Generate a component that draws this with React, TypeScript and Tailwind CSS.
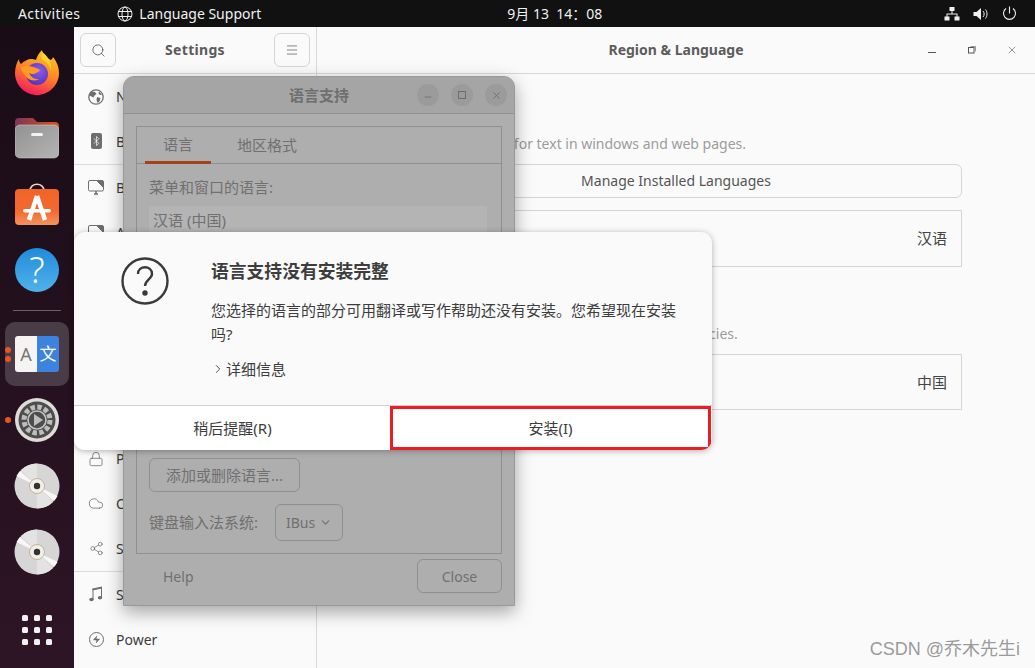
import { Bluetooth, ChevronDown, ChevronRight, Cloud, Lock, Menu, Minus, Search, Share2, X, Zap } from "lucide-react"

const FONT = "font-['Noto_Sans','Noto_Sans_CJK_SC',sans-serif]"

const Firefox = () => (
    <svg width="44" height="46" viewBox="0 0 44 46">
        <defs>
            <linearGradient id="ff" x1="0.7" y1="0" x2="0.3" y2="1">
                <stop offset="0" stopColor="#ffc81e" />
                <stop offset="0.45" stopColor="#ff8a25" />
                <stop offset="1" stopColor="#f5165f" />
            </linearGradient>
            <radialGradient id="fb" cx="0.6" cy="0.35" r="0.8">
                <stop offset="0" stopColor="#8a5be8" />
                <stop offset="1" stopColor="#4e2bb0" />
            </radialGradient>
        </defs>
        <path d="M27 1c1 6 5 8 9 10 1-1 2-2 2-3 4 5 6 10 6 16 0 12-10 22-22 22S0 36 0 24c0-6 2-11 4-14 0 3 1 4 2 5 3-3 7-5 10-5 2 0 3 0 5 1 1-4 3-7 6-10z" fill="url(#ff)" />
        <circle cx="22" cy="25" r="11" fill="url(#fb)" />
        <path d="M6 18c5-2 11-1 15 1 4 1 5 3 2 4-3 2-6 3-9 1 2 4 6 7 11 6-6 3-13 1-16-5-2-2-3-5-3-7z" fill="#ff9b23" />
        <path d="M27 3c6 4 10 10 9 19-1-6-4-9-8-11-2-2-2-5-1-8z" fill="#ffd42e" />
    </svg>
)

const Folder = () => (
    <svg width="44" height="42" viewBox="0 0 44 42">
        <defs>
            <linearGradient id="fo" x1="0" y1="0" x2="1" y2="0">
                <stop offset="0" stopColor="#7e3556" />
                <stop offset="1" stopColor="#d9541f" />
            </linearGradient>
            <linearGradient id="fg" x1="0" y1="0" x2="1" y2="1">
                <stop offset="0" stopColor="#929292" />
                <stop offset="1" stopColor="#b4b4b4" />
            </linearGradient>
        </defs>
        <path d="M0 5a4 4 0 0 1 4-4h14l4 4h18a4 4 0 0 1 4 4v12H0z" fill="url(#fo)" />
        <rect x="0" y="8" width="44" height="33" rx="5" fill="url(#fg)" stroke="#c9c9c9" strokeWidth="0.6" />
        <rect x="16" y="16" width="12" height="3" rx="1.5" fill="#f2f2f2" />
    </svg>
)

const AppStore = () => (
    <svg width="44" height="42" viewBox="0 0 44 42">
        <defs>
            <linearGradient id="as" x1="0" y1="0" x2="0" y2="1">
                <stop offset="0" stopColor="#f0642a" />
                <stop offset="0.6" stopColor="#f2692e" />
                <stop offset="1" stopColor="#f4935f" />
            </linearGradient>
        </defs>
        <path d="M15 8c0-9 14-9 14 0" fill="none" stroke="#f3d6c2" strokeWidth="1.6" />
        <rect x="0" y="6" width="44" height="36" rx="4" fill="url(#as)" />
        <path d="M22 13L14 37M22 13l8 24" fill="none" stroke="#fff" strokeWidth="4.5" />
        <rect x="8" y="26" width="28" height="3.4" rx="1.7" fill="#fff" />
    </svg>
)

const HelpIcon = () => (
    <div className="w-11 h-11 rounded-full bg-linear-to-b from-[#1f8bdc] to-[#4fb3e8] flex items-center justify-center text-white text-[36px] font-light leading-none">?</div>
)

const LangIcon = () => (
    <div className="w-11 h-9 rounded-[3px] overflow-hidden flex">
        <div className="w-[22px] bg-[#f5f4f2] flex items-center justify-center text-[#777] text-[18px]">A</div>
        <div className="w-[22px] bg-[#3b83df] flex items-center justify-center text-white text-[17px]">文</div>
    </div>
)

const Gear = () => (
    <svg width="44" height="44" viewBox="0 0 44 44">
        <circle cx="22" cy="22" r="22" fill="#dedcd9" />
        <circle cx="22" cy="22" r="18.5" fill="#4d4d4d" />
        <circle cx="22" cy="22" r="13" fill="none" stroke="#bdbdbd" strokeWidth="5" strokeDasharray="4.4 2.4" />
        <circle cx="22" cy="22" r="9" fill="#4d4d4d" stroke="#c4c4c4" strokeWidth="1.6" />
        <path d="M19 16l9 6-9 6z" fill="#bdbdbd" />
    </svg>
)

const Disc = () => (
    <svg width="46" height="46" viewBox="0 0 46 46">
        <circle cx="23" cy="23" r="22.5" fill="#d6d6d6" />
        <path d="M23 23L7 7A22.5 22.5 0 0 1 23 .5zM23 23L39 39A22.5 22.5 0 0 1 23 45.500z" fill="#e3e3e3" />
        <path d="M23 23L2.500 13A22.500 22.500 0 0 1 6 8zM23 23L43.500 33A22.500 22.500 0 0 1 40 38z" fill="#f7f7f7" />
        <circle cx="23" cy="23" r="7.500" fill="#f2efe6" stroke="#b5a88e" strokeWidth="0.8" />
        <circle cx="23" cy="23" r="3.200" fill="#333" />
    </svg>
)

const DockItem = ({ children, running = 0, active = false }: { children: React.ReactNode; running?: number; active?: boolean }) => (
    <div className="relative h-[66px] flex items-center justify-center">
        {active && <div className="absolute left-[5px] top-[1px] w-16 h-16 rounded-[10px] bg-[#4a3c47]" />}
        {running > 0 && (
            <div className="absolute left-[5px] top-0 h-full flex flex-col justify-center gap-[3px]">
                {Array.from({ length: running }).map((_, i) => <span key={i} className="w-[6px] h-[6px] rounded-full bg-[#e95420]" />)}
            </div>
        )}
        <div className="relative">{children}</div>
    </div>
)

const Dock = () => (
    <div className="w-[74px] shrink-0 flex flex-col pt-3 bg-linear-to-b from-[#190c17] to-[#2e1525]">
        <DockItem><Firefox /></DockItem>
        <DockItem><Folder /></DockItem>
        <DockItem><AppStore /></DockItem>
        <DockItem><HelpIcon /></DockItem>
        <div className="h-[18px] flex items-start pt-[7px] justify-center">
            <div className="w-12 h-px bg-[#6c5f68]" />
        </div>
        <DockItem running={2} active><LangIcon /></DockItem>
        <DockItem running={1}><Gear /></DockItem>
        <DockItem><Disc /></DockItem>
        <DockItem><Disc /></DockItem>
        <div className="mt-[30px] mx-auto grid grid-cols-3 gap-x-[6px] gap-y-[6px]">
            {Array.from({ length: 9 }).map((_, i) => <span key={i} className="w-[6px] h-[6px] rounded-[1.5px] bg-[#f2f0f1]" />)}
        </div>
    </div>
)

const TopBar = () => (
    <div className="h-[27px] shrink-0 bg-[#111111] text-[#f0f0f0] text-[14px] flex items-center relative">
        <span className="ml-[18px] tracking-[0.4px]">Activities</span>
        <svg className="ml-[37px]" width="16" height="16" viewBox="0 0 16 16" fill="none" stroke="#f0f0f0" strokeWidth="1">
            <circle cx="8" cy="8" r="7" /><ellipse cx="8" cy="8" rx="3" ry="7" /><path d="M1 5.500h14M1 10.500h14" />
        </svg>
        <span className="ml-[6px]">Language Support</span>
        <span className="ml-[246px] whitespace-pre">9月 13  14：08</span>
        <div className="ml-auto mr-[18px] flex items-center gap-[13px]">
            <svg width="16" height="14" viewBox="0 0 16 14" fill="#f0f0f0">
                <rect x="5.500" y="0" width="5" height="4" /><rect x="0.500" y="9.500" width="5" height="4" /><rect x="10.500" y="9.500" width="5" height="4" />
                <path d="M7.500 4h1v2.500H13.500V10h-1V7.500h-9V10h-1V6.500H7.500z" />
            </svg>
            <svg width="16" height="14" viewBox="0 0 16 14" fill="none">
                <path d="M0.500 5h3L8 1v12L3.500 9h-3z" fill="#f0f0f0" />
                <path d="M10 4c1.500 1.500 1.500 4.500 0 6M12.500 2.500c2 2.500 2 6.500 0 9" stroke="#f0f0f0" />
            </svg>
            <svg width="15" height="15" viewBox="0 0 15 15" fill="none" stroke="#f0f0f0" strokeWidth="1.100">
                <path d="M7.500 0.500v7M4 2.500a6 6 0 1 0 7 0" />
            </svg>
        </div>
    </div>
)

const SideRow = ({ icon, label, border = false }: { icon: React.ReactNode; label: string; border?: boolean }) => (
    <div className={`h-[45.25px] flex items-center pl-[14px] text-[14px] text-[#3d3d3d] ${border ? "border-b border-[#dcdcdc]" : ""}`}>
        <span className="w-4 flex justify-center text-[#6e6e6e]">{icon}</span>
        <span className="ml-[12px]">{label}</span>
    </div>
)

const NetIcon = () => (
    <svg width="16" height="16" viewBox="0 0 16 16" fill="#6e6e6e">
        <circle cx="8" cy="8" r="7.200" fill="none" stroke="#6e6e6e" strokeWidth="1.300" />
        <path d="M4 2.500l3 .5 1.500 2-2 1.500-1 2-2-1-2-1 .5-2.500zM9 8l3.500 1-1 3.500-2 1.500-1-3zM11 2.500l3 3-2 .5-1.500-1.500z" />
    </svg>
)

const BtIcon = () => (
    <span className="w-[11px] h-[16px] rounded-[2px] bg-[#6e6e6e] flex items-center justify-center">
        <Bluetooth size={12} className="text-white" strokeWidth={1.5} />
    </span>
)

const BgIcon = () => (
    <svg width="16" height="15" viewBox="0 0 16 15" fill="none" stroke="#6e6e6e" strokeWidth="1">
        <rect x="0.500" y="0.500" width="15" height="10.500" rx="1.500" />
        <path d="M9 1h6v6z" fill="#6e6e6e" />
        <path d="M6 14h4M8 11v3" strokeWidth="1.500" />
    </svg>
)

const NoteIcon = () => (
    <svg width="14" height="16" viewBox="0 0 14 16" fill="#6e6e6e">
        <path d="M3.500 2.500L13 .5v2L3.500 4.500z" />
        <path d="M3.500 2.500h1V13h-1zM12 1h1v10.500h-1z" />
        <ellipse cx="2.500" cy="13.500" rx="2.200" ry="1.800" />
        <ellipse cx="11" cy="11.800" rx="2.200" ry="1.800" />
    </svg>
)

const Sidebar = () => (
    <div className="w-[243px] shrink-0 border-r border-[#d8d8d8] flex flex-col">
        <div className="h-[47px] shrink-0 border-b border-[#d8d8d8] flex items-center justify-between px-[6px]">
            <button className="w-9 h-[34px] rounded-[6px] border border-[#d5d5d5] flex items-center justify-center text-[#555]"><Search size={15} strokeWidth={1.300} /></button>
            <span className="font-bold text-[14px] text-[#5c5c5c] tracking-[0.3px] -mt-[2px]">Settings</span>
            <button className="w-9 h-[34px] rounded-[6px] border border-[#d5d5d5] flex items-center justify-center text-[#555]"><Menu size={14} strokeWidth={1.200} /></button>
        </div>
        <SideRow icon={<NetIcon />} label="Network" />
        <SideRow icon={<BtIcon />} label="Bluetooth" border />
        <SideRow icon={<BgIcon />} label="Background" />
        <SideRow icon={<BgIcon />} label="Appearance" />
        <SideRow icon={<BgIcon />} label="Notifications" />
        <SideRow icon={<Search size={15} />} label="Search" />
        <SideRow icon={<BgIcon />} label="Multitasking" />
        <SideRow icon={<BgIcon />} label="Applications" />
        <SideRow icon={<Lock size={18} strokeWidth={1.200} />} label="Privacy" />
        <SideRow icon={<Cloud size={17} strokeWidth={1.200} />} label="Online Accounts" />
        <SideRow icon={<Share2 size={15} strokeWidth={1.200} />} label="Sharing" border />
        <SideRow icon={<NoteIcon />} label="Sound" />
        <SideRow icon={<span className="w-[15px] h-[15px] rounded-full border border-[#6e6e6e] flex items-center justify-center"><Zap size={9} fill="#6e6e6e" strokeWidth={0} /></span>} label="Power" />
    </div>
)

const Main = () => (
    <div className="flex-1 flex flex-col">
        <div className="h-[47px] shrink-0 border-b border-[#d8d8d8] flex items-center relative">
            <span className="w-full text-center font-bold text-[14px] text-[#5c5c5c] -mt-[2px]">Region &amp; Language</span>
            <div className="absolute right-[3px] top-0 h-full flex items-center text-[#555]">
                <span className="w-10 flex justify-center pt-[4px]"><span className="w-2 h-px bg-[#555]" /></span>
                <span className="w-10 flex justify-center"><svg width="8" height="8" viewBox="0 0 8 8" fill="none" stroke="#555"><rect x="0.500" y="1.500" width="5.500" height="5.500" /><path d="M2.500 0.500H7.500V5.500" strokeWidth="0.600" /></svg></span>
                <span className="w-10 flex justify-center"><X size={12} strokeWidth={1.200} /></span>
            </div>
        </div>
        <div className="ml-[73px] w-[572px] pt-[32px]">
            <div className="h-[27px] font-bold text-[14px] text-[#444]">Language</div>
            <p className="text-[14px] text-[#9c9c9c] h-[31px] -ml-[5px]">The language used for text in windows and web pages.</p>
            <button className="w-full h-[34px] pb-[2px] rounded-[6px] border border-[#d5d5d5] text-[14px] text-[#555] flex items-center justify-center">Manage Installed Languages</button>
            <div className="mt-[12px] h-[57px] border border-[#d5d5d5] flex items-center justify-between px-[14px] text-[15px] text-[#444]">
                <span>Language</span><span>汉语</span>
            </div>
            <div className="mt-[26px] h-[30px] font-bold text-[14px] text-[#444]">Formats</div>
            <p className="text-[14px] text-[#9c9c9c] h-[31px] tracking-[0.04px]">The format used for numbers, dates, and currencies.</p>
            <div className="h-[56px] border border-[#d5d5d5] flex items-center justify-between px-[14px] text-[15px] text-[#444]">
                <span>Formats</span><span>中国</span>
            </div>
        </div>
    </div>
)

const CircleBtn = ({ children }: { children: React.ReactNode }) => (
    <span className="w-[22px] h-[22px] rounded-full bg-[#9b9b9b] flex items-center justify-center text-[#6d6d6d]">{children}</span>
)

// 后面那个被遮住的语言支持窗口，整体压暗
const LangWindow = () => (
    <div className="absolute left-[123px] top-[76px] w-[392px] h-[530px] rounded-t-[11px] bg-[#aeaeae] border border-[#999] shadow-[0_6px_18px_rgba(0,0,0,0.35)] flex flex-col text-[14px] text-[#707070]">
        <div className="h-[37px] shrink-0 border-b border-[#8f8f8f] bg-[#a5a5a5] rounded-t-[11px] flex items-center justify-end pr-[7px] relative">
            <span className="absolute inset-0 flex items-center justify-center font-bold text-[15px] text-[#6f6f6f]">语言支持</span>
            <div className="flex gap-3 relative">
                <CircleBtn><Minus size={10} className="mt-[3px]" /></CircleBtn>
                <CircleBtn><span className="w-2 h-2 border border-[#6d6d6d]" /></CircleBtn>
                <CircleBtn><X size={11} /></CircleBtn>
            </div>
        </div>
        <div className="mx-[12px] mt-[12px] h-[428px] border border-[#8f8f8f] flex flex-col text-[15px]">
            <div className="h-[37px] shrink-0 border-b border-[#8f8f8f] flex pl-[8px]">
                <span className="w-[66px] h-[37px] border-b-[3px] border-[#a5421a] flex items-center justify-center">语言</span>
                <span className="ml-[26px] flex items-center justify-center">地区格式</span>
            </div>
            <div className="px-[12px] pt-[12px] flex flex-col flex-1">
                <span>菜单和窗口的语言:</span>
                <div className="mt-[7px] h-[30px] bg-[#b4b4b4] px-[4px] flex items-center w-[338px]">汉语 (中国)</div>
                <div className="flex-1" />
                <button className="w-[151px] h-[34px] rounded-[6px] border border-[#8f8f8f] flex items-center justify-center">添加或删除语言...</button>
                <div className="mt-[12px] mb-[12px] flex items-center">
                    <span className="w-[126px]">键盘输入法系统:</span>
                    <span className="w-[68px] h-[37px] rounded-[6px] border border-[#8f8f8f] flex items-center justify-center gap-1 text-[14px]">IBus <ChevronDown size={13} /></span>
                </div>
            </div>
        </div>
        <div className="mx-[12px] mt-[5px] flex items-center justify-between">
            <span className="ml-[27px]">Help</span>
            <button className="w-[85px] h-[34px] rounded-[6px] border border-[#8f8f8f] flex items-center justify-center">Close</button>
        </div>
    </div>
)

const Prompt = () => (
    <div className="absolute left-[74px] top-[232px] w-[638px] h-[218px] rounded-[11px] bg-[#fafafa] shadow-[0_1px_6px_rgba(0,0,0,0.3)] flex flex-col overflow-hidden">
        <div className="flex-1 flex pl-[47px] pt-[25px] pr-[30px]">
            <svg className="shrink-0" width="48" height="48" viewBox="0 0 48 48" fill="none" stroke="#3a3a3a" strokeWidth="2.400">
                <circle cx="24" cy="24" r="22.500" />
                <path d="M17 17c0-9 14-9 14 0 0 5-7 6-7 12" />
                <circle cx="24" cy="36" r="1.500" fill="#3a3a3a" />
            </svg>
            <div className="ml-[42px] -mt-[3px] text-[#3d3d3d] text-[15px]">
                <h2 className="mt-[2px] font-bold text-[17.800px] leading-[30px]">语言支持没有安装完整</h2>
                <p className="mt-[12px] leading-[24px]">您选择的语言的部分可用翻译或写作帮助还没有安装。您希望现在安装吗?</p>
                <div className="mt-[11px] flex items-center leading-[24px]"><ChevronRight size={14} strokeWidth={1.500} className="mr-[1px]" />详细信息</div>
            </div>
        </div>
        <div className="h-[45px] shrink-0 border-t border-[#d0d0d0] bg-white flex text-[15px] text-[#3d3d3d]">
            <button className="w-[317px] flex items-center justify-center">稍后提醒(R)</button>
            <button className="flex-1 border-[3px] border-[#ed1c24] -ml-px mr-px flex items-center justify-center">安装(I)</button>
        </div>
    </div>
)

export default function App() {
    return (
        <div className={`relative w-[1035px] h-[668px] overflow-hidden flex flex-col bg-[#fafafa] ${FONT}`}>
            <TopBar />
            <div className="flex-1 flex min-h-0">
                <Dock />
                <Sidebar />
                <Main />
            </div>
            <LangWindow />
            <Prompt />
            <span className="absolute right-[15px] bottom-[5px] text-[18px] text-[#9b9b9b] font-['Liberation_Sans','Noto_Sans_CJK_SC',sans-serif]">CSDN @乔木先生i</span>
        </div>
    )
}
